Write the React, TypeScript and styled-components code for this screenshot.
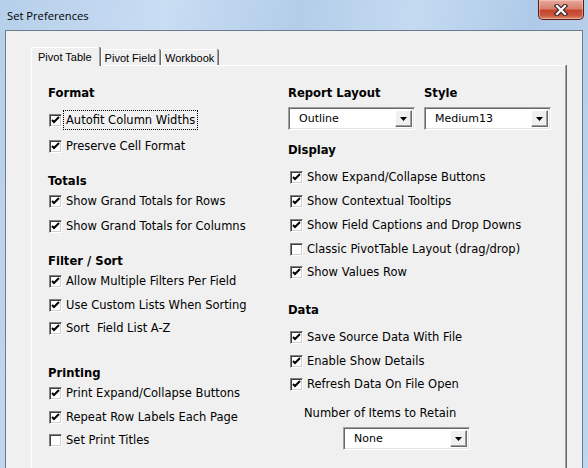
import styled, { createGlobalStyle } from 'styled-components'

const GlobalStyle = createGlobalStyle`
  html, body {
    margin: 0;
    padding: 0;
    width: 588px;
    height: 468px;
    overflow: hidden;
    background: #bcd5ee;
  }
`

const Window = styled.div`
  width: 588px;
  height: 468px;
  box-sizing: border-box;
  padding: 0 5px;
  display: flex;
  flex-direction: column;
  background: linear-gradient(100deg, #b6cfea 0%, #c9ddf3 25%, #b3cde9 45%, #c4daf1 62%, #aecae8 80%, #bfd6ef 100%);
  font-family: 'DejaVu Sans', Verdana, sans-serif;
`

const TitleBar = styled.div`
  height: 30px;
  display: flex;
  align-items: flex-start;
  justify-content: space-between;
`

const Title = styled.span`
  margin: 8px 0 0 2px;
  font-family: 'Open Sans', 'Noto Sans', sans-serif;
  font-size: 11.2px;
  line-height: 16px;
  color: #000;
`

const CloseButton = styled.div`
  width: 46px;
  height: 20px;
  margin-right: -1px;
  box-sizing: border-box;
  border: 1px solid #5a1d14;
  border-top: none;
  border-radius: 0 0 5px 5px;
  background: linear-gradient(180deg, #e9a99b 0%, #d7806d 45%, #c7442c 55%, #c9553c 80%, #dc8a6c 100%);
  box-shadow: inset 0 0 0 1px rgba(255, 220, 210, 0.45);
  display: flex;
  align-items: center;
  justify-content: center;
`

const Client = styled.div`
  flex: 1;
  min-height: 0;
  background: #f0f0f0;
  border: 1px solid #6c7c8e;
  border-bottom: none;
  padding: 17px 0 0 25px;
  display: flex;
  flex-direction: column;
`

const TabStrip = styled.div`
  display: flex;
  align-items: flex-end;
  height: 18px;
  position: relative;
  z-index: 1;
  margin-bottom: -1px;
`

const Tab = styled.div<{ $active?: boolean }>`
  box-sizing: border-box;
  height: ${p => (p.$active ? '19px' : '16px')};
  padding: ${p => (p.$active ? '1px 7px 0 6px' : '1px 3px 0 3px')};
  margin-bottom: ${p => (p.$active ? '0' : '1px')};
  background: #f0f0f0;
  border-left: 1px solid #fff;
  border-top: 1px solid #fff;
  border-right: 1px solid #a0a0a0;
  box-shadow: 1px 0 0 #696969;
  border-radius: 2px 2px 0 0;
  font-family: 'Liberation Sans', Arial, sans-serif;
  font-size: 11px;
  line-height: ${p => (p.$active ? '16px' : '14px')};
  color: #000;
  white-space: nowrap;
  margin-right: 1px;
`

const Panel = styled.div`
  flex: 1;
  width: 535px;
  box-sizing: border-box;
  background: #f0f0f0;
  border-left: 1px solid #fff;
  border-top: 1px solid #fff;
  border-right: 1px solid #a0a0a0;
  box-shadow: 1px 0 0 #696969;
  padding: 19px 0 0 16px;
  display: grid;
  grid-template-columns: 240px 1fr;
  align-items: start;
`

const Column = styled.div`
  display: flex;
  flex-direction: column;
  align-items: flex-start;
`

const Heading = styled.div<{ $mt?: number; $width?: number }>`
  margin-top: ${p => p.$mt ?? 0}px;
  width: ${p => (p.$width ? `${p.$width}px` : 'auto')};
  height: 16px;
  line-height: 16px;
  font-size: 11.6px;
  font-weight: bold;
  color: #000;
  white-space: nowrap;
`

const HeadingRow = styled.div`
  display: flex;
`

const CheckRow = styled.div<{ $mt?: number; $indent?: number }>`
  margin-top: ${p => p.$mt ?? 0}px;
  margin-left: ${p => p.$indent ?? 1}px;
  height: 20px;
  display: flex;
  align-items: center;
  gap: 2px;
  font-size: 11.5px;
  color: #000;
  white-space: pre;
`

const Box = styled.span`
  width: 13px;
  height: 13px;
  box-sizing: border-box;
  background: #fff;
  border-top: 1px solid #808080;
  border-left: 1px solid #808080;
  border-right: 1px solid #fff;
  border-bottom: 1px solid #fff;
  box-shadow: inset 1px 1px 0 #404040, inset -1px -1px 0 #d4d0c8;
  display: flex;
  align-items: center;
  justify-content: center;
`

const Label = styled.span<{ $focused?: boolean }>`
  padding: 1px 2px;
  outline: ${p => (p.$focused ? '1px dotted #000' : 'none')};
  line-height: 16px;
`

const Field = styled.div<{ $width: number; $mt?: number; $ml?: number }>`
  width: ${p => p.$width}px;
  height: 23px;
  margin-top: ${p => p.$mt ?? 0}px;
  margin-left: ${p => p.$ml ?? 0}px;
  box-sizing: border-box;
  background: #fff;
  border-top: 1px solid #a0a0a0;
  border-left: 1px solid #a0a0a0;
  border-right: 1px solid #fff;
  border-bottom: 1px solid #fff;
  box-shadow: inset 1px 1px 0 #696969, inset -1px -1px 0 #e3e3e3;
  display: flex;
  align-items: stretch;
  font-size: 11px;
  color: #000;
`

const FieldText = styled.span`
  flex: 1;
  padding-left: 10px;
  line-height: 21px;
`

const ArrowButton = styled.span`
  width: 17px;
  margin: 2px 2px 2px 0;
  box-sizing: border-box;
  background: #f0f0f0;
  border-top: 1px solid #fff;
  border-left: 1px solid #fff;
  border-right: 1px solid #696969;
  border-bottom: 1px solid #696969;
  box-shadow: inset -1px -1px 0 #a0a0a0;
  display: flex;
  align-items: center;
  justify-content: center;
`

const FieldCaption = styled.div<{ $mt?: number; $ml?: number }>`
  margin-top: ${p => p.$mt ?? 0}px;
  margin-left: ${p => p.$ml ?? 0}px;
  height: 20px;
  line-height: 20px;
  font-size: 11.5px;
  color: #000;
  white-space: nowrap;
`

const Check = ({ checked }: { checked: boolean }) => (
  <Box>
    {checked && (
      <svg width="9" height="9" viewBox="0 0 9 9">
        <path d="M1 4 L3 6 L8 1" stroke="#000" strokeWidth="2" fill="none" />
      </svg>
    )}
  </Box>
)

const CheckItem = ({
  label,
  checked = true,
  mt,
  indent,
  focused,
}: {
  label: string
  checked?: boolean
  mt?: number
  indent?: number
  focused?: boolean
}) => (
  <CheckRow $mt={mt} $indent={indent}>
    <Check checked={checked} />
    <Label $focused={focused}>{label}</Label>
  </CheckRow>
)

const Select = ({ value, width, mt, ml }: { value: string; width: number; mt?: number; ml?: number }) => (
  <Field $width={width} $mt={mt} $ml={ml}>
    <FieldText>{value}</FieldText>
    <ArrowButton>
      <svg width="7" height="4" viewBox="0 0 7 4">
        <path d="M0 0 H7 L3.5 4 Z" fill="#000" />
      </svg>
    </ArrowButton>
  </Field>
)

export default function App() {
  return (
    <>
      <GlobalStyle />
      <Window>
        <TitleBar>
          <Title>Set Preferences</Title>
          <CloseButton>
            <svg width="14" height="12" viewBox="0 0 14 12">
              <path d="M3 2 L11 10 M11 2 L3 10" stroke="#3a2a28" strokeWidth="4.5" strokeLinecap="square" />
              <path d="M3 2 L11 10 M11 2 L3 10" stroke="#fff" strokeWidth="2.2" strokeLinecap="square" />
            </svg>
          </CloseButton>
        </TitleBar>
        <Client>
          <TabStrip>
            <Tab $active>Pivot Table</Tab>
            <Tab>Pivot Field</Tab>
            <Tab>Workbook</Tab>
          </TabStrip>
          <Panel>
            <Column>
              <Heading>Format</Heading>
              <CheckItem label="Autofit Column Widths" mt={9} focused />
              <CheckItem label="Preserve Cell Format" mt={6} />
              <Heading $mt={17}>Totals</Heading>
              <CheckItem label="Show Grand Totals for Rows" mt={2} />
              <CheckItem label="Show Grand Totals for Columns" mt={5} />
              <Heading $mt={17}>Filter / Sort</Heading>
              <CheckItem label="Allow Multiple Filters Per Field" mt={2} />
              <CheckItem label="Use Custom Lists When Sorting" mt={4} />
              <CheckItem label="Sort  Field List A-Z" mt={3} />
              <Heading $mt={27}>Printing</Heading>
              <CheckItem label="Print Expand/Collapse Buttons" mt={2} />
              <CheckItem label="Repeat Row Labels Each Page" mt={4} />
              <CheckItem label="Set Print Titles" checked={false} mt={3} />
            </Column>
            <Column>
              <HeadingRow>
                <Heading $width={136}>Report Layout</Heading>
                <Heading>Style</Heading>
              </HeadingRow>
              <HeadingRow>
                <Select value="Outline" width={127} mt={6} />
                <Select value="Medium13" width={127} mt={6} ml={9} />
              </HeadingRow>
              <Heading $mt={12}>Display</Heading>
              <CheckItem label="Show Expand/Collapse Buttons" mt={9} indent={2} />
              <CheckItem label="Show Contextual Tooltips" mt={4} indent={2} />
              <CheckItem label="Show Field Captions and Drop Downs" mt={4} indent={2} />
              <CheckItem label="Classic PivotTable Layout (drag/drop)" checked={false} mt={4} indent={2} />
              <CheckItem label="Show Values Row" mt={3} indent={2} />
              <Heading $mt={20}>Data</Heading>
              <CheckItem label="Save Source Data With File" mt={9} indent={2} />
              <CheckItem label="Enable Show Details" mt={4} indent={2} />
              <CheckItem label="Refresh Data On File Open" mt={3} indent={2} />
              <FieldCaption $mt={9} $ml={16}>Number of Items to Retain</FieldCaption>
              <Select value="None" width={127} mt={4} ml={55} />
            </Column>
          </Panel>
        </Client>
      </Window>
    </>
  )
}
